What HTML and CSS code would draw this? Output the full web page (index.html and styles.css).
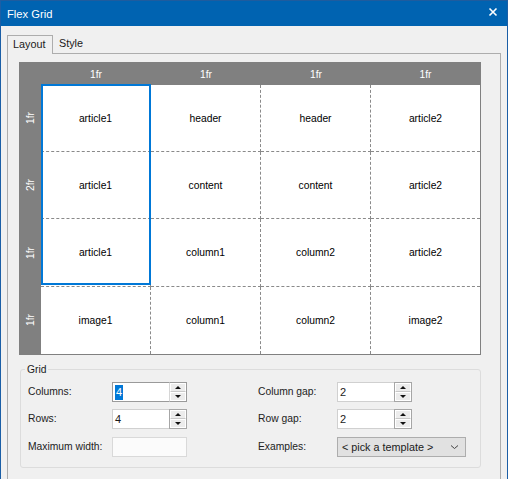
FILE: index.html
```html
<!DOCTYPE html>
<html>
<head>
<meta charset="utf-8">
<link rel="stylesheet" href="styles.css">
</head>
<body>
<div class="window">
  <div class="titlebar">
    <span class="title">Flex Grid</span>
    <svg class="close" width="10" height="10" viewBox="0 0 10 10"><path d="M1.5 1.5 L8.5 8.5 M8.5 1.5 L1.5 8.5" stroke="#fff" stroke-width="1.6" fill="none"/></svg>
  </div>
  <div class="client">
    <div class="tabs">
      <div class="tab active">Layout</div>
      <div class="tab">Style</div>
    </div>
    <div class="page">
      <div class="grid">
        <div class="corner"></div>
        <div class="colhead">1fr</div>
        <div class="colhead">1fr</div>
        <div class="colhead">1fr</div>
        <div class="colhead">1fr</div>

        <div class="rowhead"><span>1fr</span></div>
        <div class="cell">article1</div>
        <div class="cell">header</div>
        <div class="cell">header</div>
        <div class="cell last-col">article2</div>

        <div class="rowhead"><span>2fr</span></div>
        <div class="cell">article1</div>
        <div class="cell">content</div>
        <div class="cell">content</div>
        <div class="cell last-col">article2</div>

        <div class="rowhead"><span>1fr</span></div>
        <div class="cell">article1</div>
        <div class="cell">column1</div>
        <div class="cell">column2</div>
        <div class="cell last-col">article2</div>

        <div class="rowhead"><span>1fr</span></div>
        <div class="cell last-row">image1</div>
        <div class="cell last-row">column1</div>
        <div class="cell last-row">column2</div>
        <div class="cell last-row last-col">image2</div>

        <div class="sel"></div>
      </div>

      <fieldset class="group">
        <legend>Grid</legend>
        <div class="form">
          <label>Columns:</label>
          <div class="spin focused"><div class="val"><span class="hl">4</span></div><div class="spinner"><div class="btn up"></div><div class="btn down"></div></div></div>
          <span></span>
          <label>Column gap:</label>
          <div class="spin"><div class="val">2</div><div class="spinner"><div class="btn up"></div><div class="btn down"></div></div></div>

          <label>Rows:</label>
          <div class="spin"><div class="val">4</div><div class="spinner"><div class="btn up"></div><div class="btn down"></div></div></div>
          <span></span>
          <label>Row gap:</label>
          <div class="spin"><div class="val">2</div><div class="spinner"><div class="btn up"></div><div class="btn down"></div></div></div>

          <label>Maximum width:</label>
          <div class="textbox"></div>
          <span></span>
          <label>Examples:</label>
          <div class="combo"><span>&lt; pick a template &gt;</span><svg width="9" height="6" viewBox="0 0 9 6"><path d="M1 1.5 L4.5 4.5 L8 1.5" stroke="#444" stroke-width="1" fill="none"/></svg></div>
        </div>
      </fieldset>
    </div>
  </div>
</div>
</body>
</html>
```
FILE: styles.css
```css
* { box-sizing: border-box; }
html, body { margin: 0; padding: 0; }
body {
  width: 508px;
  height: 479px;
  overflow: hidden;
  font-family: "Liberation Sans", Arial, sans-serif;
  font-size: 10.3px;
  color: #1a1a1a;
  background: #f0f0f0;
}
.window {
  width: 508px;
  height: 479px;
  border-left: 1px solid #1b5ea6;
  border-right: 1px solid #1b5ea6;
  background: #f0f0f0;
  overflow: hidden;
}
.titlebar {
  height: 26px;
  background: #0063b1;
  border-top: 1px solid #1f5c9e;
  display: flex;
  align-items: center;
  justify-content: space-between;
  padding: 0 9px 0 6px;
}
.title {
  color: #fff;
  font-size: 11.2px;
  padding-top: 1px;
}
.close { display: block; margin-top: -3px; }

.client {
  padding: 9px 6px 0 6px;
}
.tabs {
  display: flex;
  height: 18px;
  font-size: 10.8px;
}
.tab {
  height: 18px;
  padding: 0 6px;
  line-height: 17px;
  color: #1a1a1a;
}
.tab.active {
  height: 19px;
  border: 1px solid #adadad;
  border-bottom: none;
  background: #f0f0f0;
  padding: 0 5px 0 5px;
  position: relative;
  z-index: 1;
  width: 46px;
}
.page {
  border: 1px solid #adadad;
  width: 494px;
  height: 440px;
  padding: 8px 0 0 11px;
  background: #f0f0f0;
}

.grid {
  position: relative;
  display: grid;
  width: 462px;
  grid-template-columns: 22px 110px 110px 110px 109px;
  grid-template-rows: 23px 67px 67px 68px 67px;
  background: #808080;
  padding: 0 1px 1px 0;
}
.corner { background: #808080; }
.colhead {
  color: #fff;
  display: flex;
  align-items: center;
  justify-content: center;
  padding-top: 1px;
}
.rowhead {
  color: #fff;
  display: flex;
  align-items: center;
  justify-content: center;
}
.rowhead span {
  writing-mode: vertical-rl;
  transform: rotate(180deg);
}
.cell {
  background: #fff;
  color: #000;
  display: flex;
  align-items: center;
  justify-content: center;
  border-right: 1px dashed #8a8a8a;
  border-bottom: 1px dashed #8a8a8a;
}
.cell.last-col { border-right: none; }
.cell.last-row { border-bottom: none; }
.sel {
  position: absolute;
  left: 22px;
  top: 22px;
  width: 110px;
  height: 201px;
  border: 2px solid #0078d7;
  pointer-events: none;
}

.group {
  margin: 8px 0 0 1px;
  width: 461px;
  border: 1px solid #dcdcdc;
  border-radius: 3px;
  padding: 6px 0 10px 4px;
}
.group legend {
  padding: 0 2px;
  line-height: 13px;
  color: #1a1a1a;
}
.form {
  display: grid;
  grid-template-columns: 84px 75px 71px 79px 129px;
  grid-template-rows: 20px 21px 20px;
  row-gap: 7px;
  margin-left: 3px;
  align-items: start;
}
.form label { color: #222; line-height: 20px; }
.spin {
  width: 75px;
  height: 20px;
  display: flex;
  background: #fff;
  border: 1px solid #d0d0d0;
}
.spin.focused { border-color: #9a9a9a; }
.val {
  flex: 1;
  padding-left: 2px;
  display: flex;
  align-items: center;
  font-size: 11px;
}
.hl {
  background: #0078d7;
  color: #fff;
  padding: 0 1px;
  line-height: 15px;
}
.spinner {
  width: 18px;
  margin: -1px -1px -1px 0;
  border: 1px solid #a6a6a6;
  background: #f0f0f0;
  display: flex;
  flex-direction: column;
}
.spin.focused .spinner { border-color: #9a9a9a; border-left-color: #d6d6d6; }
.btn {
  flex: 1;
  display: flex;
  align-items: center;
  justify-content: center;
  border: 1px solid #fff;
  background: #ececec;
}
.btn.up { border-bottom: 1px solid #c8c8c8; }
.btn.up::before {
  content: "";
  border-left: 3px solid transparent;
  border-right: 3px solid transparent;
  border-bottom: 3px solid #111;
}
.btn.down::before {
  content: "";
  border-left: 3px solid transparent;
  border-right: 3px solid transparent;
  border-top: 3px solid #111;
}
.textbox {
  width: 75px;
  height: 20px;
  border: 1px solid #d9d9d9;
  background: #fbfbfb;
}
.combo {
  width: 129px;
  height: 20px;
  border: 1px solid #adadad;
  background: #e1e1e1;
  display: flex;
  align-items: center;
  justify-content: space-between;
  padding: 0 6px 0 4px;
  font-size: 10.8px;
}
.combo svg { display: block; }
```
